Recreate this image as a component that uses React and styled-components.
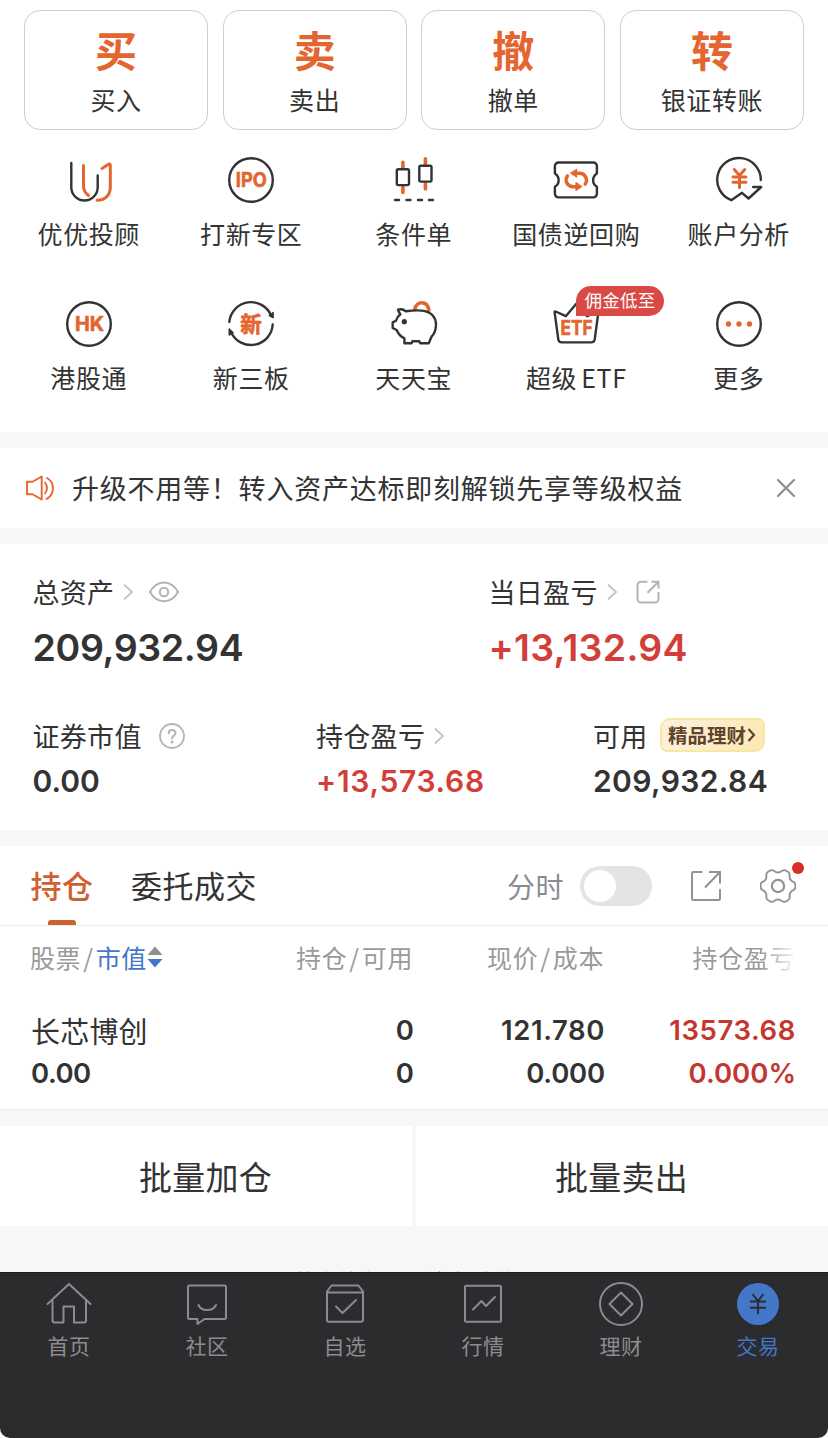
import React, { useState } from "react";
import styled, { createGlobalStyle, css } from "styled-components";

const INK = "#333333";
const ORANGE = "#e4652f";
const RED = "#d23f38";
const GRAY = "#9a9a9a";
const BLUE = "#4377c8";

const GlobalStyle = createGlobalStyle`
  * {
    box-sizing: border-box;
  }
  body {
    margin: 0;
    background: #fff;
    color: ${INK};
    font-family: "Noto Sans CJK SC", sans-serif;
  }
  p {
    margin: 0;
    white-space: nowrap;
  }
  svg {
    display: block;
    flex: none;
  }
`;

const Page = styled.div`
  width: 828px;
  height: 1438px;
  overflow: hidden;
  display: flex;
  flex-direction: column;
  background: #fff;
`;

const Band = styled.div`
  flex: none;
  height: ${(props) => props.$height}px;
  background: #f6f7f9;
`;

const QuickRow = styled.div`
  display: grid;
  grid-template-columns: repeat(4, 1fr);
  gap: 14.6px;
  height: 130px;
  padding: 10px 24px 0;
`;

const QuickCard = styled.div`
  border: 1px solid #cfcfcf;
  border-radius: 16px;
  display: flex;
  flex-direction: column;
  align-items: center;
`;

const QuickGlyph = styled.p`
  margin-top: 14px;
  font-size: 42px;
  line-height: 48px;
  font-weight: 700;
  color: ${ORANGE};
`;

const QuickLabel = styled.p`
  margin-top: 8px;
  font-size: 25px;
  line-height: 36px;
  letter-spacing: 0.6px;
`;

const ServiceGrid = styled.div`
  display: grid;
  grid-template-columns: repeat(5, 162.5px);
  grid-auto-rows: 144px;
  justify-content: center;
  height: 302px;
  padding: 26px 0.5px 0 0;
`;

const Service = styled.div`
  position: relative;
  display: flex;
  flex-direction: column;
  align-items: center;

  p {
    margin-top: 11px;
    font-size: 25px;
    line-height: 37px;
    letter-spacing: 0.6px;
    word-spacing: -2px;
  }
`;

const PromoBadge = styled.span`
  position: absolute;
  left: 81px;
  top: -14px;
  width: 88px;
  height: 30px;
  border-radius: 15px 15px 15px 0;
  background: #d94a46;
  color: #fff;
  font-size: 17.5px;
  line-height: 28px;
  letter-spacing: 0.2px;
  text-align: center;
  white-space: nowrap;
`;

const Notice = styled.div`
  flex: none;
  display: flex;
  align-items: center;
  height: 80px;
  padding: 0 32px 0 24px;

  p {
    flex: 1;
    margin: 0 0 2px 16px;
    font-size: 27px;
    letter-spacing: 0.77px;
  }
`;

const Assets = styled.div`
  flex: none;
  height: 286px;
  padding: 28px 33px 0 32.5px;
`;

const AssetRow = styled.div`
  display: grid;
  grid-template-columns: ${(props) => props.$columns};
  margin-top: ${(props) => props.$top || 0}px;
`;

const AssetLabel = styled.div`
  display: flex;
  align-items: center;
  height: 40px;
  font-size: 27px;
  line-height: 40px;
  letter-spacing: 0.3px;
  white-space: nowrap;
`;

const Gap = styled.span`
  width: ${(props) => props.$w}px;
`;

const Amount = styled.p`
  font-family: Inter, "Noto Sans CJK SC", sans-serif;
  font-weight: 600;
  letter-spacing: ${(props) => props.$track}px;
  color: ${(props) => (props.$up ? RED : INK)};
  ${(props) =>
    props.$large
      ? css`
          margin-top: 11px;
          font-size: 37.5px;
          line-height: 50px;
        `
      : css`
          margin-top: 6px;
          font-size: 30px;
          line-height: 38px;
        `}
`;

const WealthTag = styled.span`
  display: flex;
  align-items: center;
  justify-content: center;
  gap: 1px;
  width: 105px;
  height: 34px;
  margin: 0 0 2px 12px;
  border: 2px solid #f8e79f;
  border-radius: 10px 7px 10px 7px;
  background: linear-gradient(100deg, #fbf1dc, #fbe9b4);
  color: #5f432c;
  font-size: 19.5px;
  font-weight: 700;
  letter-spacing: 0;
`;

const TabBar = styled.div`
  flex: none;
  display: flex;
  align-items: center;
  height: 80px;
  padding: 0 32px 0 30.5px;
  border-bottom: 1px solid #ececec;
`;

const Tab = styled.div`
  display: flex;
  flex-direction: column;
  align-items: center;
  height: 79px;
  margin-right: 37.5px;
  padding-top: 15px;
  font-size: 31px;
  line-height: 48px;
  letter-spacing: 0.5px;
  font-weight: ${(props) => (props.$active ? 500 : 400)};
  color: ${(props) => (props.$active ? "#cf6130" : INK)};

  &::after {
    content: "";
    width: 28px;
    height: 5px;
    margin-top: 11px;
    border-radius: 3px 3px 0 0;
    background: ${(props) => (props.$active ? "#cf6130" : "transparent")};
  }
`;

const SwitchLabel = styled.p`
  margin-left: auto;
  font-size: 28px;
  letter-spacing: 0.5px;
  color: #8b8b92;
`;

const Toggle = styled.button`
  width: 72px;
  height: 40px;
  margin: 0 38px 0 16px;
  padding: 4px;
  border: 0;
  border-radius: 20px;
  background: #e4e4e6;

  &::after {
    content: "";
    display: block;
    width: 32px;
    height: 32px;
    border-radius: 50%;
    background: #fff;
    transform: translateX(${(props) => (props.$on ? 32 : 0)}px);
  }
`;

const SettingsButton = styled.div`
  position: relative;
  margin-left: 38px;
`;

const Dot = styled.span`
  position: absolute;
  right: -8px;
  top: -6px;
  width: 12px;
  height: 12px;
  border-radius: 50%;
  background: #d62f25;
`;

const columns = css`
  display: grid;
  grid-template-columns: 200px 183px 191px 191px;
`;

const TableHead = styled.div`
  ${columns}
  flex: none;
  height: 83px;
  padding: 13px 33px 0 30px;
  color: ${GRAY};
  font-size: 25px;
  line-height: 36px;
  letter-spacing: 0.6px;
`;

const HeadCell = styled.div`
  display: flex;
  align-items: center;
  height: 36px;
  white-space: nowrap;
  justify-content: ${(props) => (props.$start ? "flex-start" : "flex-end")};

  i {
    width: 14.5px;
    font-style: normal;
    text-align: center;
  }
  b {
    font-weight: 400;
    color: ${BLUE};
  }
  ${(props) =>
    props.$fade &&
    css`
      mask-image: linear-gradient(to right, #000 82%, rgba(0, 0, 0, 0.1));
    `}
`;

const Holding = styled.div`
  ${columns}
  flex: none;
  height: 101px;
  padding-left: 31px;
  border-bottom: 1px solid #ececec;
`;

const HoldingCell = styled.div`
  text-align: ${(props) => (props.$start ? "left" : "right")};
  color: ${(props) => (props.$up ? "#c4362f" : INK)};
  line-height: 43px;
`;

const Figure = styled.p`
  font-family: Inter, "Noto Sans CJK SC", sans-serif;
  font-size: 27.5px;
  font-weight: 600;
  letter-spacing: ${(props) => props.$track}px;
`;

const StockName = styled.p`
  font-size: 29px;
  letter-spacing: 0.2px;
`;

const BatchRow = styled.div`
  flex: none;
  display: grid;
  grid-template-columns: 412px 412px;
  gap: 4px;
  height: 100px;
  background: #f6f7f9;
`;

const BatchButton = styled.div`
  padding-right: 1px;
  background: #fff;
  text-align: center;
  font-size: 33px;
  line-height: 100px;
  letter-spacing: 0.2px;
`;

const Footnote = styled.div`
  flex: none;
  height: 46px;
  padding-top: 38px;
  overflow: hidden;
  background: #f6f7f9;
  color: #a5a5a8;
  font-size: 22px;
  line-height: 32px;
  text-align: center;
`;

const NavBar = styled.div`
  flex: none;
  display: grid;
  grid-template-columns: repeat(5, 138px) 136px;
  height: 166px;
  padding-top: 8px;
  border-top: 1px solid #1c1c1e;
  border-radius: 0 0 10px 10px;
  background: #2c2c2e;
`;

const NavItem = styled.div`
  display: flex;
  flex-direction: column;
  align-items: center;
  color: ${(props) => (props.$active ? BLUE : "#8c8c90")};

  p {
    margin-top: 2px;
    font-size: 21px;
    line-height: 32px;
    letter-spacing: 0.5px;
  }
`;

const Icon = ({ children }) => (
  <svg
    width="48"
    height="48"
    viewBox="0 0 48 48"
    fill="none"
    stroke={INK}
    strokeWidth="2.4"
    strokeLinecap="round"
    strokeLinejoin="round"
  >
    {children}
  </svg>
);

const iconText = {
  fill: ORANGE,
  stroke: ORANGE,
  strokeWidth: 0.6,
  textAnchor: "middle",
  fontFamily: "Inter, 'Noto Sans CJK SC', sans-serif",
  fontWeight: 700,
  lengthAdjust: "spacingAndGlyphs",
};

const AdvisorIcon = () => (
  <Icon>
    <path d="M6.3 7v24.3a13.2 13.2 0 0 0 26.4 0V19.5" />
    <g stroke={ORANGE} strokeWidth="3">
      <path d="M18.5 9.5V30c0 4.2 2 7.2 5 9.5" />
      <path d="M37 12.5l6.5-4.3c1-.5 1.800 0 1.800 1V31c0 8-5 13.300-13.300 13.300" />
    </g>
  </Icon>
);

const IpoIcon = () => (
  <Icon>
    <circle cx="24" cy="24" r="21.8" />
    <text x="24.3" y="31.3" fontSize="20" textLength="31" {...iconText}>
      IPO
    </text>
  </Icon>
);

const CandleIcon = () => (
  <Icon>
    <path
      d="M12.9 6.2v6M12.9 31v5.5M35.4 2.8v6M35.4 27.5v5.5"
      stroke={ORANGE}
      strokeWidth="3.6"
    />
    <rect x="6.8" y="13.2" width="12.2" height="15.9" rx="1.5" />
    <rect x="29.3" y="9.7" width="12.2" height="15.9" rx="1.5" />
    <path d="M5 44h4M16.500 44h4M28 44h4M39 44h4" />
  </Icon>
);

const RepoIcon = () => (
  <Icon>
    <path d="M6.5 6.5h34.800a3.600 3.600 0 0 1 3.600 3.600v7.400c-5 3.300-5 10 0 13.300v7a3.600 3.600 0 0 1-3.600 3.600H6.500a3.600 3.600 0 0 1-3.600-3.600v-7c5-3.300 5-10 0-13.300v-7.400a3.600 3.600 0 0 1 3.600-3.600z" />
    <g stroke={ORANGE} strokeWidth="3.400">
      <path d="M15.500 19.800c-3.500 5 .2 10.900 5.500 10.900h4" />
      <path d="M33.100 28.200c3.500-5-.2-10.900-5.500-10.900h-4" />
    </g>
    <path
      d="M24.700 13.400v7.800l-5.900-3.900zM23.900 26.800v7.800l5.900-3.900z"
      fill={ORANGE}
      stroke={ORANGE}
      strokeWidth="1"
    />
  </Icon>
);

const AnalysisIcon = () => (
  <Icon>
    <path d="M45.800 24a21.800 21.800 0 1 0-29.500 20.200L27 36.800l6.500 5.700L46.200 31h-8" />
    <path
      d="M19.300 13.500l5.200 6 5.200-6M24.500 20v11.500M18 21h13M18 26.300h13"
      stroke={ORANGE}
      strokeWidth="3"
    />
  </Icon>
);

const HkIcon = () => (
  <Icon>
    <circle cx="24" cy="24" r="21.8" />
    <text x="24.5" y="31.300" fontSize="20" textLength="29" {...iconText}>
      HK
    </text>
  </Icon>
);

const BoardIcon = () => (
  <Icon>
    <path d="M2.300 22A21.800 21.800 0 0 1 44.300 16" />
    <path d="M45.700 24.500A21.800 21.800 0 0 1 4.200 32.500" />
    <path
      d="M46.300 12.500v5.500l-4.200-2.200zM2 35v-6.500l4.300 4z"
      fill={INK}
      strokeWidth="1"
    />
    <text x="24" y="31.800" fontSize="21.500" {...iconText}>
      新
    </text>
  </Icon>
);

const PiggyIcon = () => (
  <Icon>
    <path d="M24.700 9.300c2-8.800 12.500-8.800 14.200.7" stroke={ORANGE} strokeWidth="3.600" />
    <path
      fill="#fff"
      d="M8 9.600c3-.8 5.800-.2 7.800 1.700 6-.9 14.200-1.300 19.200-.2 7 1.700 11 6.900 11 13.200 0 5.400-1.700 9.700-4.500 12.400l-2.700 6.600h-8.600l-.9-2h-7l-.7 2h-7.200v-5c-3.700-1.800-6.400-4.800-7.700-8.300l-4-2v-5.600l3.300-1.700c.7-2.700 2.300-5 4.400-6.500-1.200-1.300-2-2.700-2.400-4.600z"
    />
    <circle cx="14.3" cy="21.700" r="2.600" fill={INK} stroke="none" />
  </Icon>
);

const EtfIcon = () => (
  <Icon>
    <path d="M2.600 12.200c-.1-.8.400-1 1-.7l10.200 4.700L24.500 3.500l10.700 12.700 10.200-4.700c.6-.3 1.100.1 1 .7l-3.700 27.200a3.600 3.600 0 0 1-3.500 3H9.800a3.600 3.600 0 0 1-3.500-3z" />
    <text x="24.5" y="35.200" fontSize="20" textLength="32" {...iconText}>
      ETF
    </text>
  </Icon>
);

const MoreIcon = () => (
  <Icon>
    <circle cx="24" cy="24" r="21.8" />
    <g fill={ORANGE} stroke="none">
      <circle cx="13.5" cy="24" r="2.7" />
      <circle cx="24" cy="24" r="2.7" />
      <circle cx="34.5" cy="24" r="2.7" />
    </g>
  </Icon>
);

const SpeakerIcon = () => (
  <svg width="32" height="32" viewBox="0 0 32 32" fill="none" stroke={ORANGE} strokeWidth="1.9" strokeLinejoin="round" strokeLinecap="round">
    <path d="M3 9.800h5.500L17.700 4.500v23L8.500 22.200H3z" />
    <path d="M21 10.500c2.600 3 2.600 8 0 11M23 6c8 4.500 8 16.500-.5 21" />
  </svg>
);

const CloseIcon = () => (
  <svg width="20" height="20" viewBox="0 0 20 20" stroke="#8e8e8e" strokeWidth="2.2" strokeLinecap="round">
    <path d="M2 2l16 16M18 2L2 18" />
  </svg>
);

const Chevron = () => (
  <svg width="10" height="16" viewBox="0 0 10 16" fill="none" stroke="#c2c2c2" strokeWidth="1.8">
    <path d="M1 .5l8 7.500-8 7.500" />
  </svg>
);

const EyeIcon = () => (
  <svg width="30" height="22" viewBox="0 0 30 22" fill="none" stroke="#b3b3b3" strokeWidth="2">
    <path d="M1 11C8-1.700 22-1.700 29 11 22 23.300 8 23.300 1 11z" />
    <circle cx="15" cy="11" r="4.2" />
  </svg>
);

const RoundShareIcon = () => (
  <svg width="24" height="24" viewBox="0 0 24 24" fill="none" stroke="#b3b3b3" strokeWidth="2">
    <path d="M11.500 1.800H5A3.500 3.500 0 0 0 1.500 5.300V19A3.500 3.500 0 0 0 5 22.500h14a3.500 3.500 0 0 0 3.500-3.500v-7M15.500 1.800h7v6.800M22.200 2L11.500 12.700" />
  </svg>
);

const HelpIcon = () => (
  <svg width="26" height="26" viewBox="0 0 26 26" fill="none" stroke="#b3b3b3" strokeWidth="1.8" strokeLinecap="round">
    <circle cx="13" cy="13" r="12" />
    <path d="M9.700 10.200c0-4.300 6.800-4.400 6.800-.1 0 2.600-3.400 2.800-3.400 5.400" strokeWidth="2" />
    <circle cx="13.1" cy="18.900" r=".6" />
  </svg>
);

const TagChevron = () => (
  <svg width="9" height="14" viewBox="0 0 9 14" fill="none" stroke="#5f432c" strokeWidth="2.2">
    <path d="M1.500 1l5.500 6-5.500 6" />
  </svg>
);

const SortIcon = () => (
  <svg width="16" height="22" viewBox="0 0 16 22">
    <path d="M8 .5l7.500 8.500H.5z" fill="#909090" />
    <path d="M8 21.500L.5 13h15z" fill={BLUE} />
  </svg>
);

const ShareIcon = () => (
  <svg width="32" height="32" viewBox="0 0 32 32" fill="none" stroke="#929292" strokeWidth="2">
    <path d="M12.500 2H3.200Q2 2 2 3.200v25.600Q2 30 3.200 30h25.600q1.200 0 1.200-1.200V19M19 2h11v11.500M30 2L15 17.500" />
  </svg>
);

const GearIcon = () => (
  <svg width="36" height="36" viewBox="0 0 38 38" fill="none" stroke="#929292" strokeWidth="2" strokeLinejoin="round">
    <path d="M10.700 2.700c1.500-.8 3-.5 4.200.5 2.600 2 5.600 2 8.200 0 1.200-1 2.700-1.300 4.200-.5l2.500 1.500c1.300.9 1.700 2.200 1.500 3.700-.4 3.300 1 5.600 4 6.800 1.400.6 2 1.500 2 3v2.600c0 1.500-.6 2.400-2 3-3 1.200-4.400 3.500-4 6.800.2 1.500-.2 2.800-1.500 3.700l-2.500 1.500c-1.500.8-3 .5-4.200-.5-2.600-2-5.600-2-8.200 0-1.200 1-2.700 1.300-4.200.5l-2.500-1.500c-1.300-.9-1.700-2.200-1.500-3.700.4-3.300-1-5.600-4-6.800-1.400-.6-2-1.500-2-3v-2.600c0-1.500.6-2.400 2-3 3-1.200 4.400-3.500 4-6.800-.2-1.500.2-2.800 1.500-3.700z" />
    <circle cx="19" cy="19" r="6.5" strokeWidth="2.300" />
  </svg>
);

const NavIcon = ({ children }) => (
  <svg width="46" height="46" viewBox="0 0 46 46" fill="none" stroke="currentColor" strokeWidth="2" strokeLinejoin="round" strokeLinecap="round">
    {children}
  </svg>
);

const navIcons = {
  home: (
    <path d="M1.500 23L23 3l21.500 20M6.500 19v20.500q0 2 2 2h9v-16h10.500v16h10q2 0 2-2V19" />
  ),
  community: (
    <>
      <path d="M5.500 4.500h35q1.500 0 1.500 1.500v30.500q0 1.500-1.500 1.500H20.500l-7 5v-5h-8Q4 38 4 36.500V6q0-1.500 1.500-1.500z" />
      <path d="M14.500 24c3 6.800 14 6.800 17.500 0" />
    </>
  ),
  watchlist: (
    <>
      <path d="M5 10.500v28.500q0 1.800 1.800 1.800h32.400q1.800 0 1.800-1.800V10.500l-4.500-6h-27zM5 11.500h36" />
      <path d="M14 25.500l6.500 6.500L34 19" />
    </>
  ),
  market: (
    <>
      <rect x="5" y="4.800" width="36" height="36" rx="1" />
      <path d="M13 28.500l8.500-8.500 4.500 5 9-9" />
    </>
  ),
  wealth: (
    <>
      <circle cx="23" cy="23" r="21" />
      <path d="M23 11.500L34.500 23 23 34.500 11.500 23z" />
    </>
  ),
  trade: (
    <>
      <circle cx="23" cy="23" r="21" fill={BLUE} stroke="none" />
      <path
        d="M17.500 13l5.500 7 5.500-7M23 20v13M15 20.500h16M15 26.800h16"
        stroke="#2c2c2e"
        strokeLinecap="butt"
      />
    </>
  ),
};

const quickActions = [
  { glyph: "买", label: "买入" },
  { glyph: "卖", label: "卖出" },
  { glyph: "撤", label: "撤单" },
  { glyph: "转", label: "银证转账" },
];

const services = [
  { icon: AdvisorIcon, label: "优优投顾" },
  { icon: IpoIcon, label: "打新专区" },
  { icon: CandleIcon, label: "条件单" },
  { icon: RepoIcon, label: "国债逆回购" },
  { icon: AnalysisIcon, label: "账户分析" },
  { icon: HkIcon, label: "港股通" },
  { icon: BoardIcon, label: "新三板" },
  { icon: PiggyIcon, label: "天天宝" },
  { icon: EtfIcon, label: "超级 ETF", badge: "佣金低至" },
  { icon: MoreIcon, label: "更多" },
];

const navItems = [
  { key: "home", label: "首页" },
  { key: "community", label: "社区" },
  { key: "watchlist", label: "自选" },
  { key: "market", label: "行情" },
  { key: "wealth", label: "理财" },
  { key: "trade", label: "交易" },
];

function App() {
  const [timeShare, setTimeShare] = useState(false);

  return (
    <>
      <GlobalStyle />
      <Page>
        <QuickRow>
          {quickActions.map(({ glyph, label }) => (
            <QuickCard key={label}>
              <QuickGlyph>{glyph}</QuickGlyph>
              <QuickLabel>{label}</QuickLabel>
            </QuickCard>
          ))}
        </QuickRow>
        <ServiceGrid>
          {services.map(({ icon: ServiceIcon, label, badge }) => (
            <Service key={label}>
              <ServiceIcon />
              <p>{label}</p>
              {badge && <PromoBadge>{badge}</PromoBadge>}
            </Service>
          ))}
        </ServiceGrid>
        <Band $height={16} />
        <Notice>
          <SpeakerIcon />
          <p>升级不用等！转入资产达标即刻解锁先享等级权益</p>
          <CloseIcon />
        </Notice>
        <Band $height={16} />
        <Assets>
          <AssetRow $columns="456px auto">
            <div>
              <AssetLabel>
                总资产
                <Gap $w={8.5} />
                <Chevron />
                <Gap $w={16} />
                <EyeIcon />
              </AssetLabel>
              <Amount $large $track={-0.35}>
                209,932.94
              </Amount>
            </div>
            <div>
              <AssetLabel>
                当日盈亏
                <Gap $w={9} />
                <Chevron />
                <Gap $w={19} />
                <RoundShareIcon />
              </AssetLabel>
              <Amount $large $up $track={0.3}>
                +13,132.94
              </Amount>
            </div>
          </AssetRow>
          <AssetRow $columns="283.5px 277px auto" $top={43}>
            <div>
              <AssetLabel>
                证券市值
                <Gap $w={17} />
                <HelpIcon />
              </AssetLabel>
              <Amount $track={0}>0.00</Amount>
            </div>
            <div>
              <AssetLabel>
                持仓盈亏
                <Gap $w={9} />
                <Chevron />
              </AssetLabel>
              <Amount $up $track={0.7}>
                +13,573.68
              </Amount>
            </div>
            <div>
              <AssetLabel>
                可用
                <WealthTag>
                  精品理财
                  <TagChevron />
                </WealthTag>
              </AssetLabel>
              <Amount $track={0.4}>209,932.84</Amount>
            </div>
          </AssetRow>
        </Assets>
        <Band $height={16} />
        <TabBar>
          <Tab $active>持仓</Tab>
          <Tab>委托成交</Tab>
          <SwitchLabel>分时</SwitchLabel>
          <Toggle $on={timeShare} onClick={() => setTimeShare(!timeShare)} />
          <ShareIcon />
          <SettingsButton>
            <GearIcon />
            <Dot />
          </SettingsButton>
        </TabBar>
        <TableHead>
          <HeadCell $start>
            股票<i>/</i>
            <b>市值</b>
            <SortIcon />
          </HeadCell>
          <HeadCell>
            持仓<i>/</i>可用
          </HeadCell>
          <HeadCell>
            现价<i>/</i>成本
          </HeadCell>
          <HeadCell $fade>持仓盈亏</HeadCell>
        </TableHead>
        <Holding>
          <HoldingCell $start>
            <StockName>长芯博创</StockName>
            <Figure $track={-0.5}>0.00</Figure>
          </HoldingCell>
          <HoldingCell>
            <Figure $track={0}>0</Figure>
            <Figure $track={0}>0</Figure>
          </HoldingCell>
          <HoldingCell>
            <Figure $track={0.6}>121.780</Figure>
            <Figure $track={-0.2}>0.000</Figure>
          </HoldingCell>
          <HoldingCell $up>
            <Figure $track={0.6}>13573.68</Figure>
            <Figure $track={0}>0.000%</Figure>
          </HoldingCell>
        </Holding>
        <Band $height={16} />
        <BatchRow>
          <BatchButton>批量加仓</BatchButton>
          <BatchButton>批量卖出</BatchButton>
        </BatchRow>
        <Footnote>若仓位有误，请查看说明</Footnote>
        <NavBar>
          {navItems.map(({ key, label }) => (
            <NavItem key={key} $active={key === "trade"}>
              <NavIcon>{navIcons[key]}</NavIcon>
              <p>{label}</p>
            </NavItem>
          ))}
        </NavBar>
      </Page>
    </>
  );
}

export default App;
